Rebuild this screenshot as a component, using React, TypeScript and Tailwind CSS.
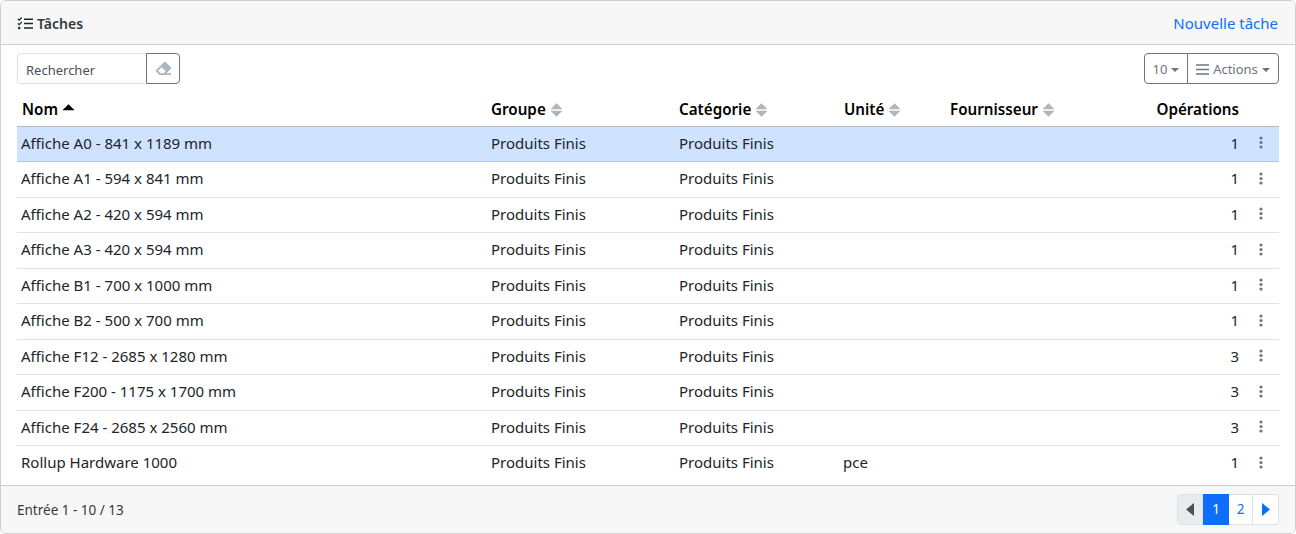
const rows = [
  { name: "Affiche A0 - 841 x 1189 mm", unit: "", ops: 1 },
  { name: "Affiche A1 - 594 x 841 mm", unit: "", ops: 1 },
  { name: "Affiche A2 - 420 x 594 mm", unit: "", ops: 1 },
  { name: "Affiche A3 - 420 x 594 mm", unit: "", ops: 1 },
  { name: "Affiche B1 - 700 x 1000 mm", unit: "", ops: 1 },
  { name: "Affiche B2 - 500 x 700 mm", unit: "", ops: 1 },
  { name: "Affiche F12 - 2685 x 1280 mm", unit: "", ops: 3 },
  { name: "Affiche F200 - 1175 x 1700 mm", unit: "", ops: 3 },
  { name: "Affiche F24 - 2685 x 2560 mm", unit: "", ops: 3 },
  { name: "Rollup Hardware 1000", unit: "pce", ops: 1 },
]

function SortIcon({ active }: { active?: boolean }) {
  return (
    <svg width="11" height="14" viewBox="0 0 11 14" className={active ? "ml-[5px] inline-block align-[-3px]" : "ml-[5px] inline-block align-[-2px]"}>
      <path d="M5.5 0.5 L11 6 H0 Z" fill={active ? "#000" : "#b4b4b4"} stroke={active ? "#000" : "#b4b4b4"} strokeWidth="0.5" strokeLinejoin="round" />
      {!active && <path d="M5.5 13.5 L11 8 H0 Z" fill="#b4b4b4" stroke="#b4b4b4" strokeWidth="0.5" strokeLinejoin="round" />}
    </svg>
  )
}

function Caret() {
  return (
    <svg width="8" height="4" viewBox="0 0 8 4" className="ml-1 inline-block">
      <path d="M0 0 H8 L4 4 Z" fill="#6c757d" />
    </svg>
  )
}

function Kebab() {
  return (
    <svg width="4" height="13" viewBox="0 0 4 13" className="ml-[20px] block">
      <circle cx="2" cy="2" r="1.6" fill="#6c757d" />
      <circle cx="2" cy="6.5" r="1.6" fill="#6c757d" />
      <circle cx="2" cy="11" r="1.6" fill="#6c757d" />
    </svg>
  )
}

function TasksIcon() {
  return (
    <svg width="16" height="13" viewBox="0 0 16 13" fill="none" className="mr-[4px]">
      <path d="M0.8 1.8 L2.2 3.2 L4.8 0.5" stroke="#212529" strokeWidth="1.2" />
      <path d="M0.8 6.3 L2.2 7.7 L4.8 5" stroke="#212529" strokeWidth="1.2" />
      <circle cx="2.2" cy="11" r="1.3" fill="#212529" />
      <path d="M7 2.2 H16 M7 6.5 H16 M7 11 H16" stroke="#212529" strokeWidth="1.6" />
    </svg>
  )
}

export default function App() {
  return (
    <div className="w-[1296px] h-[534px] bg-white text-[#212529] font-['Noto_Sans',sans-serif] text-[15px]">
      <div className="h-[534px] border border-[#d0d0d0] rounded-[6px] overflow-hidden flex flex-col">

        {/* Header */}
        <div className="h-[44px] shrink-0 bg-[#f7f7f7] border-b border-[#cfcfcf] flex items-center justify-between pl-4 pr-[17px]">
          <div className="flex items-center font-semibold text-[14px] text-[#343a40] pt-px">
            <TasksIcon />
            Tâches
          </div>
          <a className="text-[#0d6efd] text-[15px] pt-px">Nouvelle tâche</a>
        </div>

        {/* Toolbar */}
        <div className="flex items-center justify-between px-4 pt-2 h-[39px] shrink-0">
          <div className="flex h-[31px]">
            <div className="w-[130px] border border-[#dee2e6] rounded-l-[4px] pl-2 pt-[4px] flex items-center text-[13px] text-[#495057]">
              Rechercher
            </div>
            <div className="w-[34px] -ml-px border border-[#6c757d] rounded-r-[4px] flex items-center justify-center">
              <svg width="15" height="15" viewBox="0 0 512 512">
                <path fill="#adb5bd" d="M497.941 273.941c18.745-18.745 18.745-49.137 0-67.882l-160-160c-18.745-18.745-49.136-18.746-67.883 0l-256 256c-18.745 18.745-18.745 49.137 0 67.882l96 96A48.004 48.004 0 0 0 144 480h356c6.627 0 12-5.373 12-12v-40c0-6.627-5.373-12-12-12H355.883l142.058-142.059zm-302.627-62.627l137.373 137.373L265.373 416H150.628l-80-80 124.686-124.686z" />
              </svg>
            </div>
          </div>
          <div className="flex h-[31px] text-[13px] text-[#6c757d]">
            <div className="w-[44px] border border-[#6c757d] rounded-l-[4px] flex items-center justify-center pt-[2px]">
              10
              <Caret />
            </div>
            <div className="w-[92px] -ml-px border border-[#6c757d] rounded-r-[4px] flex items-center justify-center pt-[2px]">
              <svg width="13" height="11" viewBox="0 0 13 11" className="mr-[4px]">
                <path d="M0 1 H13 M0 5.5 H13 M0 10 H13" stroke="#6c757d" strokeWidth="1.6" />
              </svg>
              Actions
              <Caret />
            </div>
          </div>
        </div>

        {/* Table */}
        <div className="px-4 flex-1">
          <table className="w-[1262px] table-fixed border-collapse">
            <colgroup>
              <col className="w-[469px]" />
              <col className="w-[188px]" />
              <col className="w-[165px]" />
              <col className="w-[106px]" />
              <col className="w-[148px]" />
              <col className="w-[146px]" />
              <col className="w-[40px]" />
            </colgroup>
            <thead>
              <tr className="h-[42px] border-b border-[#b8bcc0] text-black text-[15.2px]">
                <th className="text-left font-semibold pl-[5px] pt-[10px]">Nom<SortIcon active /></th>
                <th className="text-left font-semibold pl-[5px] pt-[10px]">Groupe<SortIcon /></th>
                <th className="text-left font-semibold pl-[5px] pt-[10px]">Catégorie<SortIcon /></th>
                <th className="text-left font-semibold pl-[5px] pt-[10px]">Unité<SortIcon /></th>
                <th className="text-left font-semibold pl-[5px] pt-[10px]">Fournisseur<SortIcon /></th>
                <th className="text-right font-semibold pt-[10px]">Opérations</th>
                <th></th>
              </tr>
            </thead>
            <tbody>
              {rows.map((r, i) => (
                <tr
                  key={r.name}
                  className={
                    i === 0
                      ? "h-[35.5px] bg-[#cfe2ff] border-b border-[#b5c6dd]"
                      : i === rows.length - 1
                      ? "h-[35.5px]"
                      : "h-[35.5px] border-b border-[#dee2e6]"
                  }
                >
                  <td className="pl-1 pb-[2px]">{r.name}</td>
                  <td className="pl-[5px] pb-[2px]">Produits Finis</td>
                  <td className="pl-[5px] pb-[2px]">Produits Finis</td>
                  <td className="pl-1 pb-[2px]">{r.unit}</td>
                  <td></td>
                  <td className="text-right pb-[2px]">{r.ops}</td>
                  <td className="pb-[2px]"><Kebab /></td>
                </tr>
              ))}
            </tbody>
          </table>
        </div>

        {/* Footer */}
        <div className="h-[48px] shrink-0 bg-[#f7f7f7] border-t border-[#cfcfcf] flex items-center justify-between pl-4 pr-4 text-[13.5px] text-[#343a40]">
          <span className="pt-px">Entrée 1 - 10 / 13</span>
          <div className="flex h-[31px] text-[13.5px]">
            <div className="w-[26px] bg-[#e9ecef] border border-[#dee2e6] rounded-l-[4px] flex items-center justify-center">
              <svg width="8" height="13" viewBox="0 0 8 13"><path d="M8 0 V13 L0 6.5 Z" fill="#495057" /></svg>
            </div>
            <div className="w-[26px] bg-[#0d6efd] text-white flex items-center justify-center">1</div>
            <div className="w-[24px] bg-white text-[#0d6efd] border-y border-r border-[#dee2e6] flex items-center justify-center">2</div>
            <div className="w-[26px] bg-white border-y border-r border-[#dee2e6] rounded-r-[4px] flex items-center justify-center">
              <svg width="8" height="13" viewBox="0 0 8 13"><path d="M0 0 V13 L8 6.5 Z" fill="#0d6efd" /></svg>
            </div>
          </div>
        </div>
      </div>
    </div>
  )
}
